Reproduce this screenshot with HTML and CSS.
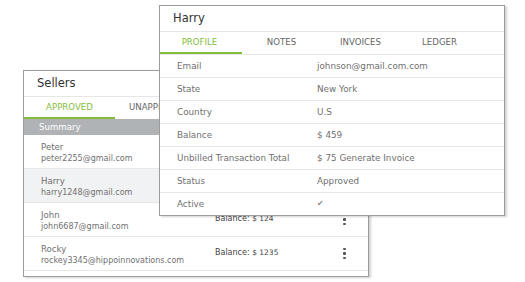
FILE: index.html
```html
<!DOCTYPE html>
<html>
    <head>
        <title>sellers</title>
        <link rel="stylesheet" href="styles.css">
    </head>
    <body>
        <div class='stage'>
            <div class='card sellers'>
                <div class='head'>Sellers</div>
                <div class='tabs'>
                    <div class='tab on'>APPROVED</div>
                    <div class='tab'>UNAPPROVED</div>
                </div>
                <div class='summary'>Summary</div>
                <div class='seller'>
                    <div class='who'><div>Peter</div><div>peter2255@gmail.com</div></div>
                    <div class='bal'></div>
                    <div class='kebab'><i></i><i></i><i></i></div>
                </div>
                <div class='seller sel'>
                    <div class='who'><div>Harry</div><div>harry1248@gmail.com</div></div>
                    <div class='bal'></div>
                    <div class='kebab'><i></i><i></i><i></i></div>
                </div>
                <div class='seller'>
                    <div class='who'><div>John</div><div>john6687@gmail.com</div></div>
                    <div class='bal'>Balance: <span>$ 124</span></div>
                    <div class='kebab'><i></i><i></i><i></i></div>
                </div>
                <div class='seller'>
                    <div class='who'><div>Rocky</div><div>rockey3345@hippoinnovations.com</div></div>
                    <div class='bal'>Balance: <span>$ 1235</span></div>
                    <div class='kebab'><i></i><i></i><i></i></div>
                </div>
            </div>
            <div class='card profile'>
                <div class='head'>Harry</div>
                <div class='tabs four'>
                    <div class='tab on'>PROFILE</div>
                    <div class='tab'>NOTES</div>
                    <div class='tab'>INVOICES</div>
                    <div class='tab'>LEDGER</div>
                </div>
                <div class='row'><span>Email</span><span>johnson@gmail.com.com</span></div>
                <div class='row'><span>State</span><span>New York</span></div>
                <div class='row'><span>Country</span><span>U.S</span></div>
                <div class='row'><span>Balance</span><span>$ 459</span></div>
                <div class='row'><span>Unbilled Transaction Total</span><span>$ 75 Generate Invoice</span></div>
                <div class='row'><span>Status</span><span>Approved</span></div>
                <div class='row'><span>Active</span><span class='tick'>&#10004;</span></div>
            </div>
        </div>
    </body>
</html>
```

FILE: styles.css
```css
body {
    margin:0;
    background:#fff;
    font-family:'DejaVu Sans', sans-serif;
    color:#707070;
}
.stage {
    position:relative;
    width:525px;
    height:282px;
}
.card {
    position:absolute;
    width:344px;
    background:#fff;
    border:1px solid #9c9c9c;
    box-shadow:2px 1px 2px rgba(0,0,0,0.18);
    overflow:hidden;
}
.sellers {
    left:23px;
    top:70px;
    height:205px;
}
.profile {
    left:159px;
    top:5px;
    height:209px;
}
.head {
    height:25px;
    line-height:25px;
    padding-left:13px;
    font-size:11.5px;
    color:#333;
    border-bottom:1px solid #e6e6e6;
}
.tabs {
    display:flex;
    height:22px;
}
.tab {
    width:91px;
    text-align:center;
    font-size:8.6px;
    line-height:20px;
    color:#666;
    border-bottom:2px solid transparent;
}
.four .tab {
    width:79px;
}
.four .tab.on {
    width:82px;
    padding-right:3px;
    box-sizing:border-box;
}
.tab.on {
    color:#84bd3a;
    border-bottom-color:#84bd3a;
}
/* the profile card hides the rest of this tab */
.sellers .tabs .tab + .tab {
    width:30px;
    text-align:left;
    padding-left:14px;
    overflow:hidden;
    white-space:nowrap;
}
.summary {
    height:16px;
    line-height:16px;
    background:#afb3b6;
    color:#fff;
    font-size:8.6px;
    padding-left:15px;
}
.seller {
    display:flex;
    align-items:center;
    height:33px;
    border-bottom:1px solid #e8e8e8;
    font-size:8.6px;
}
.seller.sel {
    background:#f1f2f3;
}
.who {
    width:174px;
    padding-left:17px;
    padding-top:2px;
    line-height:11px;
}
.who div + div {
    font-size:8px;
}
.bal {
    width:128px;
    font-size:8px;
    color:#444;
    padding-bottom:2px;
}
.bal span {
    font-size:7.5px;
}
.kebab {
    display:flex;
    flex-direction:column;
    gap:2px;
}
.kebab i {
    width:2.5px;
    height:2.5px;
    border-radius:1px;
    background:#555;
}
.row {
    display:flex;
    height:22px;
    line-height:22px;
    border-top:1px solid #e8e8e8;
    font-size:8.8px;
    padding-left:17px;
}
.row span:first-child {
    width:140px;
}
.tick {
    color:#888;
    font-size:8px;
}
```
